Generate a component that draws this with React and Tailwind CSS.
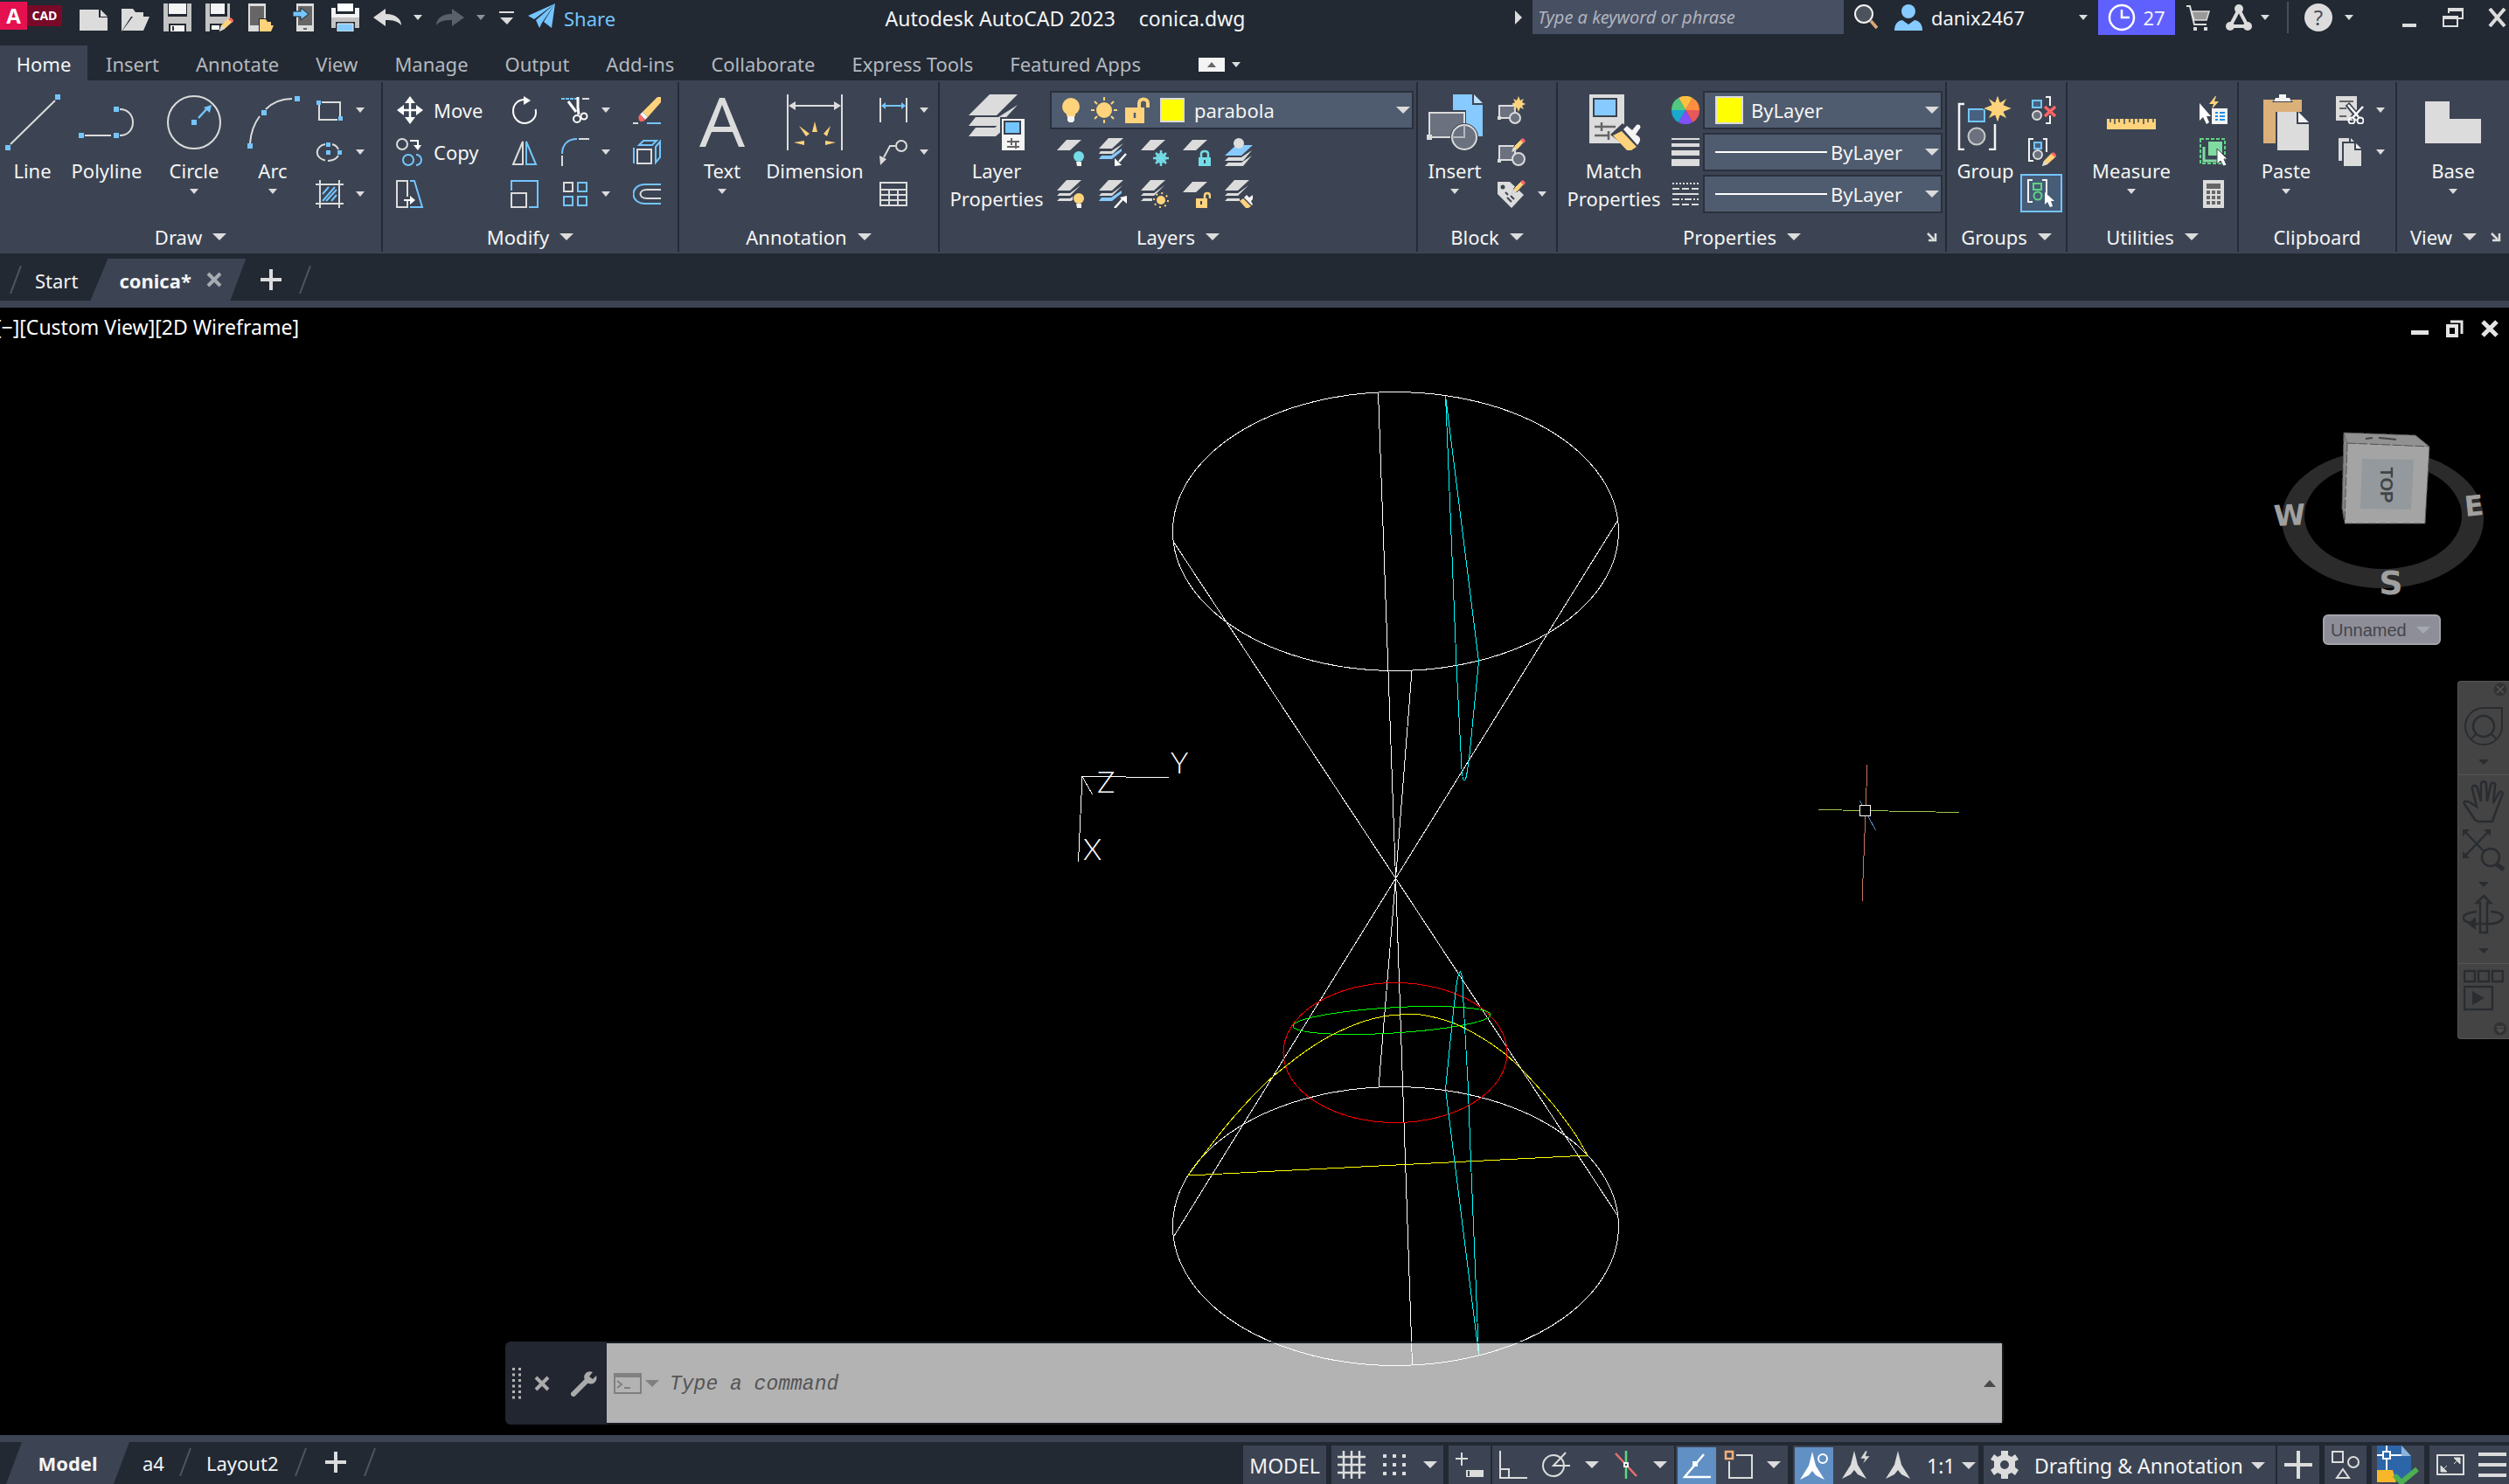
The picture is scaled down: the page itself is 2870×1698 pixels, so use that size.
import React from "react";

/* ---------- shared primitives ---------- */

const W = "#dcdcdc";
const L = "#74c5ff";
const Y = "#ffd37b";
const BG = "#3c4453";

function Svg({ w = 32, h = 32, className = "", children }) {
  return (
    <svg width={w} height={h} viewBox={`0 0 ${w} ${h}`} fill="none" className={`shrink-0 ${className}`} aria-hidden="true">
      {children}
    </svg>
  );
}

function Caret({ big = false, className = "" }) {
  return big ? (
    <Svg w={16} h={8} className={className}><path d="M0 0h16l-8 8z" fill={W} /></Svg>
  ) : (
    <Svg w={10} h={6} className={className}><path d="M0 0h10l-5 6z" fill={W} /></Svg>
  );
}

function Sq({ x, y, s = 5 }) {
  return <rect x={x} y={y} width={s} height={s} fill={L} />;
}

function IconButton({ label, className = "", children }) {
  return (
    <button type="button" aria-label={label} title={label} className={`flex shrink-0 items-center justify-center ${className}`}>
      {children}
    </button>
  );
}

function Sheet({ x = 0, y = 0, fill = W }) {
  return <path transform={`translate(${x} ${y})`} d="M11 0h17L15 12H0z" fill={fill} />;
}

const PENCIL = (
  <g>
    <path d="M17 15l2-6 9-9 4 3-9 10z" fill={Y} stroke={BG} strokeWidth="1" />
    <path d="M16 16l2-6 4 4z" fill={W} />
    <path d="M26 2l3-2 3 3-2 3z" fill="#ff6464" />
  </g>
);

/* ---------- large ribbon icons (64px) ---------- */

const big = {
  line: (
    <Svg w={64} h={64}><path d="M7 57L58 7" stroke={W} strokeWidth="2" /><Sq x={1} y={58} s={6} /><Sq x={58} y={0} s={6} /></Svg>
  ),
  polyline: (
    <Svg w={64} h={64}><path d="M7 47h30M47 17c20 0 20 30 0 30" stroke={W} strokeWidth="2" /><Sq x={0} y={44} s={6} /><Sq x={40} y={44} s={6} /><Sq x={40} y={14} s={6} /></Svg>
  ),
  circle: (
    <Svg w={64} h={64}><circle cx="32" cy="32" r="30" stroke={W} strokeWidth="2" /><path d="M37 27l11-12" stroke={L} strokeWidth="2.5" /><path d="M52 12l-2 9-7-6z" fill={L} /><Sq x={29} y={29} s={6} /></Svg>
  ),
  arc: (
    <Svg w={64} h={64}><path d="M6 56C7 42 11 33 17 25M24 17C32 9 42 5 54 5" stroke={W} strokeWidth="2" /><Sq x={3} y={56} s={6} /><Sq x={19} y={18} s={6} /><Sq x={57} y={2} s={6} /></Svg>
  ),
  text: (
    <Svg w={64} h={64}><path d="M29 4h6l23 56h-7l-7-17H20l-7 17H6zM32 12L22.500 37h19z" fill={W} fillRule="evenodd" /></Svg>
  ),
  dimension: (
    <Svg w={64} h={64}>
      <path d="M1 0v64M63 0v64M6 13h52" stroke={W} strokeWidth="2" />
      <path d="M2 13l8-5v10zM62 13l-8-5v10z" fill={W} />
      <g fill={Y}><path d="M32 31l3 12h-6zM14 36l12 9-4 3zM50 36l-4 12-4-3zM8 55l12-2v5zM56 55l-12-2v5z" /></g>
    </Svg>
  ),
  layer: (
    <Svg w={64} h={64}>
      <path d="M24 0h32L32 24H0z" fill={W} />
      <path d="M8 26h26L56 12 34 36H0z" fill={W} />
      <path d="M8 38h22l10-8v10l-9 8H0z" fill={W} />
      <path d="M36 26h28v38H36z" fill={BG} />
      <path d="M38 28h26v36H38z" fill="#f4f4f4" />
      <path d="M41 31h18v14H41z" fill={L} stroke="#3a4250" strokeWidth="2" />
      <path d="M44 54h14M44 60h14M49 50v8M54 54v8" stroke="#666" strokeWidth="2" />
    </Svg>
  ),
  insert: (
    <Svg w={64} h={64}>
      <path d="M30 0h22v12h12v36H30z" fill="#86caff" /><path d="M54 0l10 10H54z" fill="#bfe2ff" />
      <rect x="1" y="18" width="44" height="32" fill={BG} /><rect x="3" y="21" width="40" height="28" fill="#6b717f" stroke={W} strokeWidth="2" />
      <circle cx="43" cy="49" r="16" fill={BG} /><path d="M30 40v9h13V36" fill="#6b717f" />
      <circle cx="43" cy="49" r="14" fill="#6b717f" stroke={W} strokeWidth="2" />
      <path d="M43 35v14H29" stroke="#b5b8bf" strokeWidth="2" /><rect x="0" y="46" width="6" height="6" fill={W} />
    </Svg>
  ),
  match: (
    <Svg w={64} h={64}>
      <path d="M4 0h40v56H4z" fill={W} /><rect x="9" y="5" width="26" height="20" fill="#86caff" stroke="#3a4250" strokeWidth="2" />
      <path d="M10 37h24M10 47h16M18 32v10M26 42v10" stroke="#666" strokeWidth="2.500" />
      <path d="M28 46l14-13 21 18-12 13z" fill={BG} />
      <path d="M31 47l10-5 17 18-6 4h-5z" fill={Y} />
      <path d="M43 40l4-4 6 5 5-6c4-2 6 3 3 5l-4 6c7 3 6 7 2 12z" fill="#f4f4f4" />
    </Svg>
  ),
  group: (
    <Svg w={64} h={64}>
      <path d="M8 11H2v52h6M36 63h7V34" stroke="#f4f4f4" strokeWidth="2.500" />
      <rect x="13" y="17" width="18" height="14" fill="#466280" stroke={L} strokeWidth="2" />
      <circle cx="22" cy="48" r="9.500" fill="#6b717f" stroke="#c8c8c8" strokeWidth="2" />
      <path d="M46 0l3 9 8-5-4 8 10 4-10 4 4 8-8-4-3 9-3-9-8 4 4-8-10-4 10-4-4-8 8 5z" fill={Y} stroke={BG} strokeWidth="1" />
    </Svg>
  ),
  measure: (
    <Svg w={64} h={64}><path d="M4 28h56v12H4z" fill={Y} /><path d="M8 28v4M13 28v6M18 28v4M24 28v6M30 28v4M35 28v6M40 28v4M46 28v6M51 28v4M57 28v4" stroke={BG} strokeWidth="1.500" /></Svg>
  ),
  paste: (
    <Svg w={64} h={64}>
      <path d="M6 6h44v14H20v36H6z" fill="#dbb079" /><path d="M16 9h24l-4-5h-4V0h-8v4h-4z" fill={BG} /><path d="M18 8h20l-2-4h-4V0h-8v4h-4z" fill="#f4f4f4" />
      <path d="M22 20h22v14h14v30H22z" fill={W} /><path d="M46 20l12 12H46z" fill="#f4f4f4" />
    </Svg>
  ),
  base: (
    <Svg w={64} h={64}><path d="M0 8h28v20h36v28H0z" fill={W} /></Svg>
  ),
};

/* ---------- small ribbon icons (32px) ---------- */

const small = {
  rectangle: <Svg><path d="M7 7h21v18M4 10v17h21" stroke={W} strokeWidth="2" /><Sq x={1} y={5} /><Sq x={26} y={23} /></Svg>,
  ellipse: <Svg><path d="M11 7a12 9.500 0 0 0 0 18.500M14 26a13 9.500 0 0 0 12-6M26 13a12 9 0 0 0-7-6" stroke={W} strokeWidth="2" /><Sq x={12} y={5} /><Sq x={12} y={14} /><Sq x={25} y={14} /></Svg>,
  hatch: <Svg><path d="M0 5h32M0 27h32M5 0v32M27 0v32" stroke={W} strokeWidth="2" /><path d="M8 16l7-8M8 24l14-16M12 24l12-13M18 24l6-7" stroke={L} strokeWidth="2" /></Svg>,
  move: <Svg><path d="M16 3v26M3 16h26" stroke="#fff" strokeWidth="2.500" /><path d="M16 0l6 8H10zM16 32l6-8H10zM1 16l8-6v12zM31 16l-8-6v12z" fill="#fff" /></Svg>,
  copy: <Svg><circle cx="7" cy="7" r="6" stroke={W} strokeWidth="2" /><path d="M16 3h9v8" stroke="#fff" strokeWidth="2" /><path d="M20 8h9l-4 6z" fill="#fff" /><circle cx="14" cy="25" r="6" stroke={L} strokeWidth="2" /><path d="M23 19a6 6 0 1 1 0 12" stroke={L} strokeWidth="2" /></Svg>,
  stretch: <Svg><path d="M13 22v9H1V1h12v18" stroke={W} strokeWidth="2" /><path d="M16 1h5l9 30H16" stroke={L} strokeWidth="2" /><path d="M9 23h8" stroke="#fff" strokeWidth="2" /><path d="M16 18l6 5-6 5z" fill="#fff" /></Svg>,
  rotate: <Svg><path d="M16 4C8 4 3 10 3 17c0 8 6 14 13 14s13-6 13-12c0-2 0-3-.5-4" stroke="#fff" strokeWidth="2" /><path d="M15 0l8 5-8 5z" fill="#fff" /></Svg>,
  mirror: <Svg><path d="M14 4v26H3z" stroke={W} strokeWidth="2" /><path d="M18 4v26h11z" stroke={L} strokeWidth="2" /></Svg>,
  scale: <Svg><path d="M1 12V1h30v30H21" stroke={L} strokeWidth="2" /><path d="M1 15h17v16H1z" stroke={W} strokeWidth="2" /></Svg>,
  trim: <Svg><path d="M0 3h18" stroke={L} strokeWidth="2" strokeDasharray="4 1" /><path d="M24 3h8" stroke={W} strokeWidth="2" /><path d="M19 1v12l1 8M8 6l9 12" stroke="#fff" strokeWidth="3" /><circle cx="18" cy="26" r="4" stroke="#fff" strokeWidth="2" /><circle cx="26" cy="23" r="3.500" stroke="#fff" strokeWidth="2" /></Svg>,
  fillet: <Svg><path d="M1 18C1 7 8 1 18 1" stroke={L} strokeWidth="2" /><path d="M20 1h12M1 20v12" stroke={W} strokeWidth="2" /></Svg>,
  array: <Svg><path d="M3 3h10v10H3z" stroke={W} strokeWidth="2" /><path d="M19 3h10v10H19zM3 19h10v10H3zM19 19h10v10H19z" stroke={L} strokeWidth="2" /></Svg>,
  erase: <Svg><path d="M11 18L28 1l4 0v6L17 24z" fill={Y} /><path d="M11 18l6 6-3 3-6-6z" fill="#f4f4f4" /><path d="M8 21l6 6c-6 6-10-2-6-6z" fill="#ff6464" /><path d="M0 31h6" stroke={W} strokeWidth="2" /><path d="M16 31h16" stroke={L} strokeWidth="2" /></Svg>,
  explode: <Svg><path d="M1 11v18M12 3h15l-5 5H7zM26 10l5-6v18l-5 6z" stroke={L} strokeWidth="2" /><path d="M5 13h16v16H5z" stroke={W} strokeWidth="2" /></Svg>,
  offset: <Svg><path d="M32 5H14C-4 5-4 27 14 27h18" stroke={L} strokeWidth="2" /><path d="M32 11H16c-10 0-10 10 0 10h16" stroke={W} strokeWidth="2" /></Svg>,
  linear: <Svg><path d="M1 2v28M31 2v28" stroke={W} strokeWidth="2" /><path d="M6 11h20" stroke={L} strokeWidth="2" /><path d="M2 11l5-4v8zM30 11l-5-4v8z" fill={L} /></Svg>,
  leader: <Svg><path d="M5 22l7-13h6" stroke={W} strokeWidth="2" /><circle cx="25" cy="9" r="6" stroke={W} strokeWidth="2" /><path d="M0 20l8 4-7 7z" fill={W} /></Svg>,
  table: <Svg><path d="M1 3h30v26H1zM1 11h30M1 17h30M1 23h30M11 11v18M21 11v18" stroke={W} strokeWidth="2" /></Svg>,
  layOff: <Svg><Sheet y={2} /><circle cx="25" cy="21" r="6" fill="#74dce6" /><path d="M22 27h6v5h-5z" fill="#f4f4f4" /></Svg>,
  layIso: <Svg><Sheet y={0} /><path d="M2 15h12l14-9-12 12H0zM2 21h12" fill={W} /><path d="M3 20h11l12-8v3L15 24H0z" fill="#86caff" /><path d="M31 18l-8 9" stroke="#fff" strokeWidth="2.500" /><path d="M18 32v-9l8 8z" fill="#fff" /></Svg>,
  layFrz: <Svg><Sheet y={2} /><g stroke="#74dce6" strokeWidth="2.500"><path d="M23 14v18M14 23h18M17 17l12 12M29 17L17 29" /></g><circle cx="23" cy="23" r="5" stroke="#74dce6" strokeWidth="2" /></Svg>,
  layLck: <Svg><Sheet y={2} /><path d="M21 22v-4c0-4 8-4 8 0v4" stroke="#74dce6" strokeWidth="2.500" /><path d="M18 22h14v10H18z" fill="#74dce6" /><path d="M25 25v4" stroke={BG} strokeWidth="2" /></Svg>,
  layCur: <Svg><path d="M13 8h19L19 20H0z" fill="#86caff" /><circle cx="16" cy="6" r="6" fill={W} /><path d="M4 22h15l12-8-10 12H0zM4 28h15l12-8-10 12H0z" fill={W} /></Svg>,
  layOn: <Svg><Sheet /><path d="M3 15h12l12-9-12 12H0zM3 21h12l6-4v4l-5 3H0z" fill={W} /><circle cx="25" cy="21" r="7" fill={BG} /><circle cx="25" cy="21" r="6" fill={Y} /><path d="M22 27h6v5h-5z" fill="#f4f4f4" /></Svg>,
  layUniso: <Svg><Sheet /><path d="M3 15h12l12-9-12 12H0z" fill={W} /><path d="M3 20h11l12-8v3L15 24H0z" fill="#86caff" /><path d="M18 32l9-10" stroke="#fff" strokeWidth="2.500" /><path d="M32 18v9l-8-7z" fill="#fff" /></Svg>,
  layThaw: <Svg><Sheet /><path d="M3 15h12l12-9-12 12H0zM3 21h10v3H0z" fill={W} /><circle cx="23" cy="23" r="9" fill={BG} /><circle cx="23" cy="23" r="5" fill={Y} /><circle cx="23" cy="23" r="8" stroke={Y} strokeWidth="2" strokeDasharray="2 4.280" /></Svg>,
  layUlk: <Svg><Sheet y={2} /><path d="M25 22v-4c0-4 6-4 6 0v3" stroke={Y} strokeWidth="2.500" /><path d="M15 21h13v11H15z" fill={Y} /><path d="M21 24v4" stroke={BG} strokeWidth="2" /></Svg>,
  layMatch: <Svg><Sheet /><path d="M3 15h12l12-9-12 12H0zM3 21h14v3H0z" fill={W} /><path d="M17 24l4-3 9 9-3 2h-3z" fill={Y} /><path d="M22 20l3-3 3 3 4-3v5l-2 2 2 4-1 1z" fill="#f4f4f4" /></Svg>,
  blkNew: <Svg><path d="M2 11h18v14H2z" fill="#6b717f" stroke={W} strokeWidth="2" /><circle cx="20" cy="25" r="6" fill="#6b717f" stroke={W} strokeWidth="2" /><path d="M0 23h4v4H0z" fill={W} /><path d="M24 0l2 5 4-2-2 4 4 2-4 2 2 4-4-2-2 5-2-5-4 2 2-4-4-2 4-2-2-4 4 2z" fill={Y} /></Svg>,
  blkEdit: <Svg><path d="M2 9h18v16H2z" fill="#6b717f" stroke={W} strokeWidth="2" /><circle cx="24" cy="24" r="7" fill="#6b717f" stroke={W} strokeWidth="2" /><path d="M0 24h4v4H0z" fill={W} />{PENCIL}</Svg>,
  blkAttr: <Svg><path d="M0 2h14l16 15-14 15L0 16z" fill={W} /><circle cx="6" cy="8" r="2.500" fill={BG} /><path d="M9 14l3 3M11 20l5 5M15 18l4 4" stroke={BG} strokeWidth="2" />{PENCIL}</Svg>,
  wheel: (
    <Svg>
      <g transform="translate(16 16)">
        <path d="M0 0L-8-14A16 16 0 0 1 8-14z" fill="#fec041" /><path d="M0 0L8-14A16 16 0 0 1 16 0z" fill="#ff8f3f" /><path d="M0 0H16A16 16 0 0 1 8 14z" fill="#e85858" />
        <path d="M0 0L8 14A16 16 0 0 1-8 14z" fill="#8050f8" /><path d="M0 0L-8 14A16 16 0 0 1-16 0z" fill="#18a8d0" /><path d="M0 0H-16A16 16 0 0 1-8-14z" fill="#50c880" />
      </g>
    </Svg>
  ),
  lineweight: <Svg><path d="M0 0h32v2H0zM0 6h32v4H0zM0 14h32v6H0zM0 24h32v8H0z" fill={W} /></Svg>,
  linetype: <Svg><g stroke={W} strokeWidth="2"><path d="M1 4h30" strokeDasharray="2 2" /><path d="M1 10h30" strokeDasharray="8 3" /><path d="M1 16h30" /><path d="M1 22h30" strokeDasharray="8 2 2 2" /><path d="M1 28h30" strokeDasharray="8 3" /></g></Svg>,
  ungroup: <Svg><path d="M20 1h5v10M25 22v9h-5" stroke="#f4f4f4" strokeWidth="2" /><rect x="5" y="5" width="10" height="8" fill="#466280" stroke={L} strokeWidth="2" /><circle cx="10" cy="22" r="5" fill="#6b717f" stroke={W} strokeWidth="2" /><path d="M19 12l12 11M31 12L19 23" stroke="#ff6464" strokeWidth="3.500" /></Svg>,
  groupEdit: <Svg><path d="M6 1H1v25h5M17 1h4v15" stroke="#f4f4f4" strokeWidth="2" /><rect x="7" y="5" width="8" height="7" fill="#466280" stroke={L} strokeWidth="2" /><circle cx="11" cy="19" r="5" fill="#6b717f" stroke={W} strokeWidth="2" /><path d="M16 32l2-6 9-9 5 4-10 9z" fill={Y} /><path d="M16 32l2-6 4 4z" fill={W} /><path d="M26 18l3-2 3 3-1 3z" fill="#ff6464" /></Svg>,
  groupSel: <Svg><path d="M6 1H1v25h5M17 1h5v16" stroke="#f4f4f4" strokeWidth="2" /><rect x="7" y="5" width="9" height="7" stroke="#5fd583" strokeWidth="2" /><circle cx="12" cy="19" r="4.500" stroke="#5fd583" strokeWidth="2" /><path d="M20 15v14l3-3 3 6 3-1-2-6h4z" fill="#fff" /></Svg>,
  quickSel: <Svg><path d="M18 0l-7 9h5l-2 6 8-9h-5l2-6z" fill={Y} /><path d="M0 8v20l4-4 4 8 3-2-3-7h5z" fill="#fff" /><path d="M14 14h18v18H14z" fill="#f4f4f4" /><path d="M18 19h3M18 23h3M18 27h3M23 19h6M23 23h6M23 27h6" stroke="#1f8fe8" strokeWidth="2" /></Svg>,
  selAll: <Svg><rect x="1" y="1" width="28" height="28" stroke="#5fd583" strokeWidth="2" strokeDasharray="4 2" /><path d="M10 4h16v16H10z" fill="#7fdb9f" /><path d="M5 10v16h15" stroke="#7fdb9f" strokeWidth="3" /><path d="M20 12v18l4-4 3 6 4-1-3-7h4z" fill="#fff" stroke={BG} strokeWidth="1" /></Svg>,
  calc: <Svg><path d="M4 0h24v32H4z" fill={W} /><path d="M8 4h16v6H8z" fill="#666" /><path d="M8 14h16M8 20h16M8 26h16" stroke="#666" strokeWidth="4" strokeDasharray="4 2" /></Svg>,
  cut: <Svg><path d="M0 0h24v28H0z" fill={W} /><path d="M4 6h16M4 14h8M4 23h8" stroke="#666" strokeWidth="2" /><path d="M13 9l14 17M32 11L18 26" stroke={BG} strokeWidth="6" /><path d="M14 10l12 14M31 12L19 25" stroke="#fff" strokeWidth="2.500" /><circle cx="18" cy="28" r="3.500" stroke="#fff" strokeWidth="2" /><circle cx="28" cy="28" r="3.500" stroke="#fff" strokeWidth="2" /></Svg>,
  copyClip: <Svg><path d="M3 0h12v4h-8v22H3z" fill={W} /><path d="M17 0l4 4h-4z" fill={W} /><path d="M9 6h12v8h8v18H9z" fill={W} /><path d="M23 6l6 6h-6z" fill="#f4f4f4" /></Svg>,
};

/* ---------- ribbon ---------- */

function BigButton({ icon, lines, caret, className = "" }) {
  return (
    <button type="button" className={`flex shrink-0 flex-col items-center pt-[6px] ${className}`}>
      {big[icon]}
      <span className="mt-[7px] block whitespace-nowrap text-center leading-[32px]">
        {lines.map((t) => <span key={t} className="block">{t}</span>)}
      </span>
      {caret && <Caret className="mt-[5px]" />}
    </button>
  );
}

function Tool({ icon, label, caret, text }) {
  return (
    <div className="flex h-[48px] items-center">
      <IconButton label={label}>{small[icon]}{text && <span className="ml-[11px] leading-[32px]">{text}</span>}</IconButton>
      {caret && <IconButton label={`${label} options`} className="ml-[14px]"><Caret /></IconButton>}
    </div>
  );
}

function Column({ items, className = "" }) {
  return <div className={`shrink-0 ${className}`}>{items.map((it) => <Tool key={it.label} {...it} />)}</div>;
}

function Panel({ title, caret = true, launcher, last, children }) {
  return (
    <section className={`my-[2px] flex min-w-0 flex-col pt-[8px] ${last ? "" : "border-r-2 border-[#252b35]"}`} aria-label={title}>
      <div className="flex h-[144px]">{children}</div>
      <div className="flex h-[42px] items-center pt-[8px]">
        <button type="button" className="flex flex-1 items-center justify-center whitespace-nowrap">
          {title}
          {caret && <Caret big className="ml-[12px]" />}
        </button>
        {launcher && (
          <IconButton label={`${title} settings`} className="mr-[8px] w-[14px]">
            <Svg w={12} h={12}><path d="M1 2l7 7" stroke={W} strokeWidth="2.500" /><path d="M10 2v8H2" stroke={W} strokeWidth="2.500" /></Svg>
          </IconButton>
        )}
      </div>
    </section>
  );
}

function Combo({ label, value, width, children }) {
  return (
    <label className={`flex h-[44px] items-center border-2 border-[#2a303c] bg-[#4f5b6e] ${width}`}>
      {children}
      <select aria-label={label} defaultValue={value} className="min-w-0 flex-1 appearance-none bg-transparent outline-none">
        <option>{value}</option>
      </select>
      <Caret big className="mr-[2px]" />
    </label>
  );
}

function Ribbon() {
  return (
    <div className="grid grid-cols-[438fr_339fr_298fr_547fr_160fr_445fr_138fr_196fr_181fr_128fr] bg-[#3c4453] text-[22px] text-[#f4f4f4]">
      <Panel title="Draw">
        <BigButton icon="line" lines={["Line"]} className="w-[74px]" />
        <BigButton icon="polyline" lines={["Polyline"]} className="w-[96px]" />
        <BigButton icon="circle" lines={["Circle"]} caret className="w-[104px]" />
        <BigButton icon="arc" lines={["Arc"]} caret className="w-[76px]" />
        <Column className="ml-[11px]" items={[
          { icon: "rectangle", label: "Rectangle", caret: true },
          { icon: "ellipse", label: "Ellipse", caret: true },
          { icon: "hatch", label: "Hatch", caret: true },
        ]} />
      </Panel>
      <Panel title="Modify">
        <div className="grid grid-cols-[131px_58px_82px_32px] pl-[15px]">
          <Column items={[
            { icon: "move", label: "Move", text: "Move" },
            { icon: "copy", label: "Copy", text: "Copy" },
            { icon: "stretch", label: "Stretch" },
          ]} />
          <Column items={[{ icon: "rotate", label: "Rotate" }, { icon: "mirror", label: "Mirror" }, { icon: "scale", label: "Scale" }]} />
          <Column items={[
            { icon: "trim", label: "Trim", caret: true },
            { icon: "fillet", label: "Fillet", caret: true },
            { icon: "array", label: "Array", caret: true },
          ]} />
          <Column items={[{ icon: "erase", label: "Erase" }, { icon: "explode", label: "Explode" }, { icon: "offset", label: "Offset" }]} />
        </div>
      </Panel>
      <Panel title="Annotation">
        <BigButton icon="text" lines={["Text"]} caret className="w-[98px]" />
        <BigButton icon="dimension" lines={["Dimension"]} className="w-[114px]" />
        <Column className="ml-[17px]" items={[
          { icon: "linear", label: "Linear", caret: true },
          { icon: "leader", label: "Leader", caret: true },
          { icon: "table", label: "Table" },
        ]} />
      </Panel>
      <Panel title="Layers">
        <BigButton icon="layer" lines={["Layer", "Properties"]} className="w-[126px] pl-[4px]" />
        <div className="pt-[2px]">
          <Combo label="Layer" value="parabola" width="w-[416px]">
            <Svg w={20} h={28} className="ml-[12px]"><circle cx="10" cy="10" r="10" fill={Y} /><path d="M5 16h10v5H5z" fill={Y} /><path d="M6 21h8v5l-2 2H8l-2-2z" fill="#f4f4f4" /></Svg>
            <Svg w={32} h={32} className="ml-[12px]"><circle cx="16" cy="16" r="9" fill={Y} /><path d="M16 1v4M16 27v4M1 16h4M27 16h4M5 6l3 3M24 23l3 3M5 26l3-3M24 9l3-3" stroke={Y} strokeWidth="2" /></Svg>
            <Svg w={28} h={30} className="ml-[8px]"><path d="M16 12V7c0-6 10-6 10 0v5" stroke={Y} strokeWidth="4" /><path d="M0 12h22v18H0z" fill={Y} /><path d="M11 18v6" stroke="#4f5b6e" strokeWidth="2.500" /></Svg>
            <span className="ml-[12px] mr-[11px] h-[28px] w-[28px] border-2 border-[#dcdcdc] bg-[#ffff00]" />
          </Combo>
          <div className="grid grid-cols-[repeat(5,48px)] pl-[8px] pt-[2px]">
            {[
              ["layOff", "Off"], ["layIso", "Isolate"], ["layFrz", "Freeze"], ["layLck", "Lock"], ["layCur", "Make Current"],
              ["layOn", "Turn All Layers On"], ["layUniso", "Unisolate"], ["layThaw", "Thaw All Layers"], ["layUlk", "Unlock"], ["layMatch", "Match Layer"],
            ].map(([icon, label]) => <Tool key={icon} icon={icon} label={label} />)}
          </div>
        </div>
      </Panel>
      <Panel title="Block">
        <BigButton icon="insert" lines={["Insert"]} caret className="w-[84px]" />
        <Column className="ml-[7px]" items={[
          { icon: "blkNew", label: "Create Block" },
          { icon: "blkEdit", label: "Block Editor" },
          { icon: "blkAttr", label: "Edit Attributes", caret: true },
        ]} />
      </Panel>
      <Panel title="Properties" launcher>
        <BigButton icon="match" lines={["Match", "Properties"]} className="w-[126px] pl-[2px]" />
        <Column className="ml-[4px]" items={[
          { icon: "wheel", label: "Object Color" },
          { icon: "lineweight", label: "Lineweight" },
          { icon: "linetype", label: "Linetype" },
        ]} />
        <div className="ml-[4px] flex flex-col gap-[4px] pt-[2px]">
          <Combo label="Color" value="ByLayer" width="w-[274px]">
            <span className="ml-[12px] mr-[9px] h-[32px] w-[32px] border-2 border-[#dcdcdc] bg-[#ffff00]" />
          </Combo>
          <Combo label="Lineweight" value="ByLayer" width="w-[274px]"><span className="ml-[12px] mr-[4px] h-[2px] w-[128px] bg-white" /></Combo>
          <Combo label="Linetype" value="ByLayer" width="w-[274px]"><span className="ml-[12px] mr-[4px] h-[2px] w-[128px] bg-white" /></Combo>
        </div>
      </Panel>
      <Panel title="Groups">
        <BigButton icon="group" lines={["Group"]} className="ml-[4px] w-[80px]" />
        <div>
          <div className="ml-[9px]"><Tool icon="ungroup" label="Ungroup" /><Tool icon="groupEdit" label="Group Edit" /></div>
          <button type="button" aria-label="Group Selection On/Off" aria-pressed="true" className="mt-[1px] flex h-[44px] w-[48px] items-center justify-center border-2 border-[#74c5ff] bg-[#475c76]">{small.groupSel}</button>
        </div>
      </Panel>
      <Panel title="Utilities">
        <BigButton icon="measure" lines={["Measure"]} caret className="ml-[16px] w-[114px]" />
        <Column className="ml-[21px]" items={[
          { icon: "quickSel", label: "Quick Select" },
          { icon: "selAll", label: "Select All" },
          { icon: "calc", label: "Quick Calculator" },
        ]} />
      </Panel>
      <Panel title="Clipboard" caret={false}>
        <BigButton icon="paste" lines={["Paste"]} caret className="ml-[18px] w-[72px]" />
        <Column className="ml-[21px]" items={[
          { icon: "cut", label: "Cut", caret: true },
          { icon: "copyClip", label: "Copy Clip", caret: true },
        ]} />
      </Panel>
      <Panel title="View" launcher last>
        <BigButton icon="base" lines={["Base"]} caret className="ml-[32px] w-[64px]" />
      </Panel>
    </div>
  );
}

/* ---------- title bar ---------- */

function TitleBar() {
  const quick = [
    ["New", <Svg><path d="M0 7h22v9h10v15H0z" fill={W} /><path d="M24 7l8 8h-8z" fill={W} /></Svg>],
    ["Open", <Svg><path d="M0 32V6h13l3 4h9v5H11z" fill={W} /><path d="M13 15h19l-7 16H1z" fill={W} /></Svg>],
    ["Save", <Svg><path d="M0 0h5v15h22V0h5v32h-6v-9H6v9H0z" fill="#c4c4c4" /><path d="M6 0h20v12H6z" fill="#f4f4f4" /><path d="M8 25h16v7H8z" fill="#f4f4f4" /><path d="M11 26v5" stroke="#333" strokeWidth="2" /></Svg>],
    ["Save As", <Svg><path d="M0 0h5v15h20V0h3v18l-8 5H5v9H0z" fill="#c4c4c4" /><path d="M6 0h16v12H6z" fill="#f4f4f4" /><path d="M7 25h9v5H7z" fill="#f4f4f4" /><path d="M16 32l2-7 9-9 5 4-10 9z" fill={Y} /><path d="M16 32l2-7 4 4z" fill={W} /><path d="M26 18l3-2 3 3-1 3z" fill="#ff6464" /></Svg>],
    ["Open from Web & Mobile", <Svg><path d="M1 0h20v17h-8v15H1z" fill={W} /><path d="M3 3h16v14h-6v8H3z" fill="#666" /><path d="M14 32V18h7l2 3h4v4h3l-3 7z" fill={Y} /></Svg>],
    ["Save to Web & Mobile", <Svg><path d="M8 0h20v32H8z" fill={W} /><path d="M10 3h16v22H10z" fill="#666" /><path d="M16 29h4" stroke="#666" strokeWidth="2" /><path d="M4 9h9V5l9 7-9 7v-4H4z" fill={L} stroke="#222933" strokeWidth="1" /></Svg>],
    ["Plot", <Svg><path d="M7 0h18v9H7z" fill="#fff" /><path d="M0 5h5v7h22V5h5v12H0z" fill="#f4f4f4" /><path d="M0 16h32v12h-5v-7H5v7H0z" fill="#c4c4c4" /><path d="M7 23h18v9H7z" fill="#86caff" stroke="#f4f4f4" /></Svg>],
    ["Undo", <Svg><path d="M0 16L14 6v6c12 0 18 6 18 13-4-5-9-6-18-6v7z" fill={W} /></Svg>],
  ];
  return (
    <header className="flex h-[52px] items-center bg-[#222933] pb-[13px] text-[22px] text-[#f4f4f4]">
      <button type="button" aria-label="AutoCAD menu" className="flex items-center self-start pt-[2px] font-['Open_Sans',sans-serif] font-bold">
        <span className="flex h-[32px] w-[31px] items-center justify-center bg-[#e51050] text-[24px] leading-[32px] text-white">A</span>
        <span className="flex h-[24px] w-[40px] items-center justify-center bg-[#780a28] text-[14px] leading-[24px] text-white">CAD</span>
      </button>
      <nav aria-label="Quick access" className="ml-[20px] flex items-center gap-[16px]">
        {quick.map(([label, icon]) => <IconButton key={label} label={label}>{icon}</IconButton>)}
      </nav>
      <IconButton label="Undo list" className="ml-[14px]"><Caret /></IconButton>
      <IconButton label="Redo" className="ml-[16px]"><Svg><path d="M32 16L18 6v6C6 12 0 18 0 25c4-5 9-6 18-6v7z" fill="#5a6069" /></Svg></IconButton>
      <IconButton label="Redo list" className="ml-[14px]"><Svg w={10} h={6}><path d="M0 0h10l-5 6z" fill="#8d9197" /></Svg></IconButton>
      <IconButton label="Customize quick access" className="ml-[16px]"><Svg w={17} h={16}><path d="M0 1h17v2H0zM1 8h15l-7 8z" fill={W} /></Svg></IconButton>
      <button type="button" className="ml-[16px] flex items-center gap-[9px] pt-[2px] leading-[30px] text-[#74c5ff]">
        <Svg className="mb-[4px]"><path d="M31 1L0 15l7 4zM31 1L9 20l4 9 3-6zM31 1L18 22l9 7z" fill={L} /></Svg>Share
      </button>
      <h1 className="flex-1 whitespace-pre pt-[3px] text-center text-[23px] leading-[30px]">
        <span>Autodesk AutoCAD 2023</span><span className="ml-[27px]">conica.dwg</span>
      </h1>
      <IconButton label="Collapse search" className="mr-[12px]"><Svg w={8} h={16}><path d="M0 0l8 8-8 8z" fill={W} /></Svg></IconButton>
      <input type="text" aria-label="Search" placeholder="Type a keyword or phrase" className="h-[39px] w-[356px] bg-[#474f63] px-[6px] text-[20px] italic text-[#b0b4bd] outline-none placeholder:text-[#b0b4bd]" />
      <IconButton label="Search" className="ml-[12px]"><Svg><circle cx="11" cy="12" r="10" fill="#4d535c" stroke="#f4f4f4" strokeWidth="2" /><path d="M19 20l7 8" stroke="#dba873" strokeWidth="3.500" /></Svg></IconButton>
      <button type="button" className="ml-[14px] flex items-center gap-[10px] leading-[30px]">
        <Svg><circle cx="16" cy="9" r="8" fill="#86caff" /><path d="M0 31c0-7 3-11 9-12l7 5 7-5c6 1 9 5 9 12z" fill="#86caff" /></Svg>danix2467
      </button>
      <IconButton label="Account menu" className="ml-[62px]"><Caret /></IconButton>
      <button type="button" className="ml-[12px] flex h-[41px] w-[88px] items-center justify-center gap-[8px] bg-[#6060ff] leading-[30px]">
        <Svg><circle cx="16" cy="16" r="14" stroke="#fff" strokeWidth="2.500" /><path d="M16 7v9h9" stroke="#fff" strokeWidth="2.500" /></Svg>27
      </button>
      <IconButton label="App store" className="ml-[13px]"><Svg w={28} h={30}><path d="M0 2h4l5 21h14" stroke={W} strokeWidth="2" /><path d="M6 8h20l-3 10H9z" fill="#999" stroke={W} strokeWidth="1.500" /><path d="M8 26h4v4H8zM20 26h4v4h-4z" fill={W} /></Svg></IconButton>
      <IconButton label="Autodesk services" className="ml-[17px]"><Svg w={30} h={30}><path d="M15 6L5 25h20z" stroke={W} strokeWidth="4" /><circle cx="15" cy="5" r="5" fill={W} /><circle cx="5" cy="25" r="5" fill={W} /><circle cx="25" cy="25" r="5" fill={W} /></Svg></IconButton>
      <IconButton label="Services menu" className="ml-[10px]"><Caret /></IconButton>
      <span className="ml-[20px] h-[36px] w-[2px] bg-[#474f5c]" />
      <IconButton label="Help" className="ml-[18px]"><span className="flex h-[32px] w-[32px] items-center justify-center rounded-full bg-[#dcdcdc] text-[24px] leading-[30px] text-[#4a5058]">?</span></IconButton>
      <IconButton label="Help menu" className="ml-[14px]"><Caret /></IconButton>
      <IconButton label="Minimize" className="ml-[56px]"><Svg w={16} h={24}><path d="M0 19h16v4H0z" fill={W} /></Svg></IconButton>
      <IconButton label="Restore" className="ml-[30px]"><Svg w={24} h={24}><path d="M7 7V3h16v10h-5" stroke={W} strokeWidth="2" /><path d="M6 1h18v4H6zM0 10h18v4H0z" fill={W} /><path d="M1 11h16v11H1z" stroke={W} strokeWidth="2" /></Svg></IconButton>
      <IconButton label="Close" className="ml-[28px] mr-[3px]"><Svg w={21} h={22}><path d="M2 1l17 20M19 1L2 21" stroke={W} strokeWidth="4" /></Svg></IconButton>
    </header>
  );
}

function RibbonTabs() {
  const tabs = ["Insert", "Annotate", "View", "Manage", "Output", "Add-ins", "Collaborate", "Express Tools", "Featured Apps"];
  return (
    <nav aria-label="Ribbon tabs" className="flex h-[40px] items-stretch bg-[#222933] text-[22px] text-[#b4b8be]">
      <button type="button" className="w-[100px] bg-[#3c4453] pt-[2px] text-[#f4f4f4]">Home</button>
      {tabs.map((t) => <button key={t} type="button" className="whitespace-nowrap px-[21px] pt-[2px]">{t}</button>)}
      <IconButton label="Minimize ribbon" className="ml-[45px] pt-[3px]"><Svg w={30} h={16}><path d="M0 0h30v16H0z" fill="#f4f4f4" /><path d="M10 11h10l-5-6z" fill="#666" /></Svg></IconButton>
      <IconButton label="Ribbon options" className="ml-[8px] pt-[3px]"><Caret /></IconButton>
    </nav>
  );
}

function Slash() {
  return <Svg w={14} h={32}><path d="M1 32L13 0" stroke="#4b5563" strokeWidth="2" /></Svg>;
}

function Plus() {
  return <Svg w={24} h={24}><path d="M12 0v24M0 12h24" stroke={W} strokeWidth="4" /></Svg>;
}

function FileTabs() {
  return (
    <nav aria-label="Drawings" className="flex h-[62px] items-end border-b-8 border-[#3c4453] bg-[#222933] pl-[11px] text-[22px] text-[#f4f4f4]">
      <div className="flex h-[48px] items-center"><Slash /></div>
      <button type="button" className="h-[48px] pl-[15px] pr-[14px] pt-[2px]">Start</button>
      <div className="flex h-[48px] w-[178px] items-center bg-[#3c4453] pl-[33px] [clip-path:polygon(20px_0,100%_0,calc(100%-18px)_100%,0_100%)]">
        <button type="button" className="pt-[2px] font-bold">conica*</button>
        <IconButton label="Close conica" className="ml-[17px]"><Svg w={18} h={18}><path d="M2 2l14 14M16 2L2 16" stroke="#a8abb2" strokeWidth="4" /></Svg></IconButton>
      </div>
      <IconButton label="New drawing" className="ml-[17px] h-[48px]"><Plus /></IconButton>
      <div className="ml-[20px] flex h-[48px] items-center"><Slash /></div>
    </nav>
  );
}

/* ---------- drawing canvas ---------- */

/* Smooth open curve through the given points. */
function curve(p) {
  let d = `M${p[0][0]} ${p[0][1]}`;
  for (let i = 0; i < p.length - 1; i++) {
    const a = p[i - 1] || p[i], b = p[i], c = p[i + 1], e = p[i + 2] || c;
    d += `C${b[0] + (c[0] - a[0]) / 6} ${b[1] + (c[1] - a[1]) / 6} ${c[0] - (e[0] - b[0]) / 6} ${c[1] - (e[1] - b[1]) / 6} ${c[0]} ${c[1]}`;
  }
  return d;
}

const PARABOLA = [
  [1359, 1345], [1377, 1321], [1407, 1283], [1445, 1242], [1472, 1219], [1499, 1199], [1526, 1183], [1556, 1170], [1582, 1163],
  [1602, 1161], [1625, 1161], [1661, 1170], [1691, 1185], [1718, 1203], [1739, 1222], [1763, 1248], [1784, 1273], [1802, 1298], [1816, 1322],
];

function Drawing() {
  return (
    <svg viewBox="0 352 2870 1290" preserveAspectRatio="xMidYMid slice" className="absolute inset-0 h-full w-full" fill="none" shapeRendering="crispEdges" role="img" aria-label="Double cone wireframe with conic sections">
      <g stroke="#fff">
        <ellipse cx="1596.500" cy="608" rx="255" ry="159.500" />
        <ellipse cx="1596.500" cy="1403" rx="255" ry="159.500" />
        <path d="M1343 621L1596.500 1005L1850.500 1391M1850.500 595.500L1596.500 1005L1342.500 1415M1576.500 449L1596.500 1005L1615.500 1562M1615 767.500L1596.500 1005L1577 1244" />
        <path d="M1233.500 986L1238 888.500L1337.500 889.500M1238 888.500L1249.500 909" />
      </g>
      <g fill="#fff" className="font-['Lato',sans-serif] font-light" fontSize="34">
        <text x="1339" y="885">Y</text>
        <text x="1239" y="984">X</text>
        <text x="1255" y="907">Z</text>
      </g>
      <ellipse cx="1596" cy="1204.500" rx="128" ry="80" stroke="#f00" />
      <ellipse cx="1592" cy="1167.500" rx="113" ry="14.600" transform="rotate(-3.350 1592 1167.500)" stroke="#0f0" />
      <path d={curve(PARABOLA) + "L1359 1345"} stroke="#ff0" />
      <g stroke="#0ff">
        <path d="M1653.500 453L1691.500 757L1680.500 868C1678 886 1677 893 1675 893S1672 886 1671.500 870L1666 761L1655.500 500z" />
        <path d="M1691.500 1550L1653.500 1246L1663 1152L1666.500 1123Q1669 1111 1670.500 1112T1673 1123L1674 1147L1679 1237L1682.500 1329z" />
      </g>
      <g>
        <path d="M2080 926.500L2241 929.500" stroke="#9cc84c" />
        <path d="M2136 875L2130 1032" stroke="#c87460" />
        <path d="M2127.500 916L2145.500 950" stroke="#5580c0" />
        <rect x="2127.500" y="921.500" width="12" height="12" fill="#000" stroke="#fff" />
      </g>
    </svg>
  );
}

function ViewCube() {
  return (
    <div className="flex w-[260px] flex-col items-center">
      <svg width="260" height="200" viewBox="2596 490 260 200" role="img" aria-label="View cube">
        <ellipse cx="2725.500" cy="594" rx="115.500" ry="79" fill="#2b2b2b" />
        <ellipse cx="2726" cy="590" rx="90" ry="61" fill="#000" />
        <path d="M2681 495l82 3 16 13-94-4z" fill="#919191" />
        <path d="M2681 495l4 12-2 92-4-17z" fill="#858585" />
        <path d="M2685 507l94 4-5 88h-92z" fill="#a4a4a4" />
        <path d="M2702 525l59 1-3 57-58-1z" fill="#93999c" />
        <path d="M2681 495l82 3 16 13-5 88h-92l-3-17zM2685 507l-3 92M2685 507l94 4" stroke="#555" strokeDasharray="10 3" fill="none" />
        <path d="M2706 502l8-1M2721 501l12 1 8 1" stroke="#444" strokeWidth="2" />
        <g className="font-['DejaVu_Sans',sans-serif] font-bold" fill="#a0a0a0" textAnchor="middle">
          <text x="2619" y="601" fontSize="33" transform="rotate(-3 2619 589)">W</text>
          <text x="2830" y="590" fontSize="32" transform="rotate(-6 2830 579)">E</text>
          <text x="2735" y="680" fontSize="38">S</text>
        </g>
        <text x="2730" y="562" fontSize="20" fill="#3f4447" textAnchor="middle" transform="rotate(90 2730 555)" className="font-['Liberation_Sans',sans-serif] font-bold">TOP</text>
      </svg>
      <button type="button" className="mr-[3px] mt-[13px] flex h-[35px] w-[135px] items-center justify-between rounded-[6px] border-2 border-[#a3a3ab] bg-[#8e8e98] pl-[7px] pr-[9px] font-['Liberation_Sans',sans-serif] text-[20px] leading-[28px] text-[#44454c]">
        Unnamed
        <Svg w={18} h={10}><path d="M1 1h16l-8 8z" fill="#a5a9b2" /></Svg>
      </button>
    </div>
  );
}

function NavBar() {
  const K = "#292c30";
  const tiny = <Svg w={12} h={6}><path d="M0 0h12L6 6z" fill={K} /></Svg>;
  return (
    <aside aria-label="Navigation bar" className="flex h-[410px] w-[59px] flex-col items-center rounded-l-[4px] border border-r-0 border-[#555] bg-[#444]">
      <IconButton label="Close navigation bar" className="mr-[2px] mt-[1px] self-end"><Svg w={16} h={16}><circle cx="8" cy="8" r="7.500" fill="#333" /><path d="M4 4l8 8M12 4l-8 8" stroke="#555" strokeWidth="1.500" /></Svg></IconButton>
      <IconButton label="Steering wheel" className="mt-[11px]"><Svg w={46} h={46}><path d="M23 2h21v21a21 21 0 1 1-21-21z" stroke={K} strokeWidth="2" /><circle cx="23" cy="23" r="12" stroke={K} strokeWidth="2.500" /><path d="M14 32l-5 5M32 32l5 5" stroke={K} strokeWidth="2" /></Svg></IconButton>
      <IconButton label="Wheel options" className="mt-[15px]">{tiny}</IconButton>
      <hr className="mt-[11px] w-full border-[#555]" />
      <IconButton label="Pan" className="mt-[5px]"><Svg w={48} h={50}><path d="M14 46L2 28c-2-4 3-4 6-2l8 5-5-20c-1-5 4-6 6-1l4 15V6c0-5 6-5 6 0l1 19 4-18c1-5 6-4 5 1l-2 19 6-11c2-4 6-2 4 2L36 42l-2 6H18z" stroke={K} strokeWidth="2.500" /></Svg></IconButton>
      <IconButton label="Zoom extents" className="mt-[6px]"><Svg w={50} h={50}><path d="M4 4l26 27M30 4L4 31" stroke={K} strokeWidth="2.500" /><path d="M1 1h8l-8 8zM33 1h-8l8 8zM1 34v-8l8 8z" fill={K} /><circle cx="33" cy="33" r="10" fill="#444" stroke={K} strokeWidth="2.500" /><path d="M40 41l8 6" stroke={K} strokeWidth="5" /></Svg></IconButton>
      <IconButton label="Zoom options" className="mt-[11px]">{tiny}</IconButton>
      <IconButton label="Orbit" className="mt-[8px]"><Svg w={48} h={48}><path d="M24 2l8 8h-4v34h-8V10h-4z" stroke={K} strokeWidth="2.500" /><path d="M16 20C-4 22-4 32 14 34h20c16-3 16-13-2-14" stroke={K} strokeWidth="2.500" /><path d="M6 34l9-8v15z" fill={K} /></Svg></IconButton>
      <IconButton label="Orbit options" className="mt-[14px]">{tiny}</IconButton>
      <hr className="mt-[11px] w-full border-[#555]" />
      <IconButton label="ShowMotion" className="mt-[6px]"><Svg w={46} h={48}><path d="M1 2h12v12H1zM17 2h12v12H17zM33 2h12v12H33zM1 20h32v26H1z" stroke={K} strokeWidth="2.500" /><path d="M10 25l14 8-14 8z" fill={K} /></Svg></IconButton>
      <IconButton label="Navigation bar options" className="mb-[3px] mr-[2px] mt-auto self-end"><Svg w={16} h={16}><circle cx="8" cy="8" r="7.500" fill="#333" /><path d="M4 6h8M5 9h6l-3 3z" stroke="#555" strokeWidth="1.500" /></Svg></IconButton>
    </aside>
  );
}

function CommandLine() {
  return (
    <div className="flex h-[95px] w-[1714px] max-w-full overflow-hidden rounded-[6px]">
      <div className="flex w-[116px] shrink-0 items-center bg-[#222631] pl-[8px]">
        <Svg w={10} h={36}><path d="M1.500 0v36M8.500 0v36" stroke="#b4b4b4" strokeWidth="3" strokeDasharray="3 3.500" /></Svg>
        <IconButton label="Close command line" className="ml-[15px]"><Svg w={18} h={18}><path d="M2 2l14 14M16 2L2 16" stroke="#aaa" strokeWidth="4" /></Svg></IconButton>
        <IconButton label="Customize command line" className="ml-[24px]"><Svg w={30} h={30}><path d="M3 27L19 11" stroke="#aaa" strokeWidth="6" strokeLinecap="round" /><path d="M25 2c-6-3-12 3-9 9l4 4c6 2 11-3 9-9l-4 4-4-3z" fill="#aaa" /></Svg></IconButton>
      </div>
      <div className="flex min-w-0 flex-1 items-center border-y-2 border-r-2 border-[#1b2027]/80 bg-white/70 bg-clip-padding pl-[8px] pr-[7px]">
        <IconButton label="Recent commands">
          <Svg w={32} h={24}><path d="M1 1h30v22H1z" stroke="#808080" strokeWidth="2" /><path d="M1 1h30v4H1z" fill="#808080" /><path d="M4 9l5 4-5 4M12 17h7" stroke="#808080" strokeWidth="2" /></Svg>
          <Svg w={16} h={8} className="ml-[4px]"><path d="M0 0h16l-8 8z" fill="#808080" /></Svg>
        </IconButton>
        <input type="text" aria-label="Command" placeholder="Type a command" className="ml-[12px] min-w-0 flex-1 bg-transparent pt-[3px] font-['Liberation_Mono',monospace] text-[23px] italic text-[#555] outline-none placeholder:text-[#555]" />
        <IconButton label="Command history"><Svg w={14} h={8}><path d="M0 8h14L7 0z" fill="#4a4a4a" /></Svg></IconButton>
      </div>
    </div>
  );
}

function Canvas() {
  return (
    <main className="relative flex-1 overflow-hidden bg-black text-[23px] text-white">
      <Drawing />
      <div className="relative flex items-start justify-between pt-[7px]">
        <p className="-ml-[6px] leading-[30px]">[−][Custom View][2D Wireframe]</p>
        <div className="flex items-center gap-[20px] pr-[12px] pt-[7px]">
          <IconButton label="Minimize drawing"><Svg w={20} h={20}><path d="M0 12h20v5H0z" fill="#e4e4e4" /></Svg></IconButton>
          <IconButton label="Restore drawing"><Svg w={20} h={20}><path d="M5 2h13v14" stroke="#e4e4e4" strokeWidth="3" /><path d="M2 7h10v11H2z" stroke="#e4e4e4" strokeWidth="4" /></Svg></IconButton>
          <IconButton label="Close drawing"><Svg w={20} h={20}><path d="M2 2l16 16M18 2L2 18" stroke="#e4e4e4" strokeWidth="5" /></Svg></IconButton>
        </div>
      </div>
      <div className="absolute right-[14px] top-[138px]"><ViewCube /></div>
      <div className="absolute right-0 top-[427px]"><NavBar /></div>
      <div className="absolute inset-x-0 bottom-[12px] flex justify-center"><CommandLine /></div>
    </main>
  );
}

/* ---------- status bar ---------- */

function Group({ gap = "ml-[6px]", className = "", children }) {
  return <div className={`flex h-[44px] shrink-0 items-center bg-[#3c4453] ${gap} ${className}`}>{children}</div>;
}

function StatusBar() {
  const scaleMark = <path d="M16 0l4 16 10 16-10-5-4-5-4 5-10 5 10-16z" />;
  return (
    <footer className="flex h-[56px] items-end justify-between border-t-8 border-[#3c4453] bg-[#222933] text-[22px] text-[#f4f4f4]">
      <nav aria-label="Layouts" className="flex h-[48px] items-center pl-[7px]">
        <button type="button" aria-current="page" className="h-[48px] w-[141px] bg-[#3c4453] font-bold [clip-path:polygon(18px_0,100%_0,calc(100%-18px)_100%,0_100%)]">Model</button>
        <button type="button" className="ml-[15px]">a4</button>
        <span className="ml-[17px] pb-[2px]"><Slash /></span>
        <button type="button" className="ml-[17px]">Layout2</button>
        <span className="ml-[19px] pb-[2px]"><Slash /></span>
        <IconButton label="New layout" className="ml-[21px] pb-[2px]"><Plus /></IconButton>
        <span className="ml-[20px] pb-[2px]"><Slash /></span>
      </nav>
      <div className="flex items-center text-[23px]">
        <Group gap=""><button type="button" className="w-[95px] pt-[2px] leading-[30px]">MODEL</button></Group>
        <Group className="w-[128px] justify-center gap-[20px]">
          <IconButton label="Grid"><Svg><path d="M0 7h32M0 16h32M0 25h32M7 0v32M16 0v32M25 0v32" stroke={W} strokeWidth="2.500" /></Svg></IconButton>
          <IconButton label="Snap"><Svg w={26} h={26}><g stroke={W} strokeWidth="4" strokeDasharray="4 7"><path d="M0 3h26M0 13h26M0 23h26" /></g></Svg></IconButton>
          <IconButton label="Snap options"><Caret big /></IconButton>
        </Group>
        <Group className="w-[48px] justify-center"><IconButton label="Dynamic input"><Svg><path d="M7 2v15M0 9h14" stroke={W} strokeWidth="2" /><path d="M12 22h20v8H12z" fill={W} /><path d="M15 23v6" stroke={BG} strokeWidth="2" /></Svg></IconButton></Group>
        <Group gap="ml-[2px]" className="w-[208px] justify-between pl-[8px] pr-[8px]">
          <IconButton label="Ortho"><Svg><path d="M1 0v31h31M1 21h10v10" stroke={W} strokeWidth="2" /></Svg></IconButton>
          <IconButton label="Polar tracking"><Svg><circle cx="13" cy="17" r="12" stroke={W} strokeWidth="2" /><path d="M27 2L13 17h19" stroke={W} strokeWidth="2" /></Svg></IconButton>
          <IconButton label="Polar options"><Caret big /></IconButton>
          <IconButton label="Isometric drafting"><Svg w={28} h={32}><path d="M2 3l24 26" stroke="#e87070" strokeWidth="2.500" /><path d="M14 0v32" stroke="#5fd583" strokeWidth="2.500" /><path d="M12 14h4v4h-4z" fill={BG} stroke="#f4f4f4" strokeWidth="2" /></Svg></IconButton>
          <IconButton label="Isometric options"><Caret big /></IconButton>
        </Group>
        <Group gap="ml-[2px]" className="w-[128px]">
          <button type="button" aria-label="Object snap tracking" aria-pressed="true" className="ml-[2px] flex h-[42px] w-[44px] items-center justify-center self-end bg-[#6090c4]"><Svg><path d="M24 3L2 29h30" stroke="#fff" strokeWidth="2.500" /><path d="M11 11h6v6h-6z" fill="#fff" /></Svg></button>
          <IconButton label="Object snap" className="ml-[9px]"><Svg w={34} h={34}><path d="M14 6h18v26H6V13" stroke={W} strokeWidth="2" /><path d="M2 2h8v8H2z" stroke="#f5b078" strokeWidth="2.500" /></Svg></IconButton>
          <IconButton label="Object snap options" className="ml-[15px]"><Caret big /></IconButton>
        </Group>
        <Group className="w-[212px]">
          <button type="button" aria-label="Annotation visibility" aria-pressed="true" className="ml-[2px] flex h-[42px] w-[44px] items-center justify-center self-end bg-[#6090c4]"><Svg><g fill="#fff" transform="translate(-2 0)">{scaleMark}</g><circle cx="26" cy="8" r="5" stroke="#fff" strokeWidth="2" /></Svg></button>
          <IconButton label="Auto scale" className="ml-[10px]"><Svg><g fill={W} transform="translate(-2 0)">{scaleMark}</g><path d="M27 0l-6 9h5l-2 6 8-9h-5l2-6z" fill={W} stroke={BG} strokeWidth=".500" /></Svg></IconButton>
          <IconButton label="Annotation scale" className="ml-[16px]"><Svg><g fill={W}>{scaleMark}</g></Svg></IconButton>
          <button type="button" className="ml-[17px] flex items-center gap-[8px] pt-[2px] leading-[30px]">1:1<Caret big /></button>
        </Group>
        <Group className="w-[334px]">
          <IconButton label="Workspace settings" className="ml-[8px]"><Svg><path d="M12 0h8v5l4 2 4-3 4 6-4 2v7l4 3-4 6-4-3-4 2v5h-8v-5l-4-2-4 3-4-6 4-3v-7L0 10l4-6 4 3 4-2z" fill={W} /><circle cx="16" cy="16" r="5" fill={BG} /></Svg></IconButton>
          <button type="button" className="ml-[18px] flex items-center gap-[9px] whitespace-nowrap pt-[2px] leading-[30px]">Drafting &amp; Annotation<Caret big /></button>
        </Group>
        <Group gap="ml-[2px]" className="w-[48px] justify-center"><IconButton label="Annotation monitor"><Svg><path d="M16 0v32M0 16h32" stroke={W} strokeWidth="4" /></Svg></IconButton></Group>
        <Group className="w-[48px] justify-center"><IconButton label="Isolate objects"><Svg><path d="M1 1h12v12H1zM13 21l7 10H6z" stroke={W} strokeWidth="2" /><circle cx="25" cy="13" r="6" stroke={W} strokeWidth="2" /></Svg></IconButton></Group>
        <Group className="w-[60px] justify-center"><IconButton label="Drawing format" className="self-start"><Svg w={48} h={44}><path d="M0 0h28l11 12v20l-8 8H0z" fill="#2c66a8" /><path d="M28 0l11 12H28z" fill="#8db4dc" /><path d="M0 28h18l4 14H0z" fill="#f8b62a" /><path d="M11 0v28M0 11h28" stroke="#fff" strokeWidth="2" /><rect x="7" y="7" width="8" height="8" fill="#2c66a8" stroke="#fff" strokeWidth="2" /><path d="M20 34l8 8 18-15" stroke="#4cb050" strokeWidth="6" /></Svg></IconButton></Group>
        <Group className="w-[91px] gap-[16px] pl-[8px]">
          <IconButton label="Clean screen"><Svg><path d="M1 5h30v22H1z" stroke={W} strokeWidth="2" /><path d="M5 24v-7l7 7zM27 8v7l-7-7zM7 22l5-5M20 15l5-5" fill={W} stroke={W} /></Svg></IconButton>
          <IconButton label="Customization"><Svg><path d="M0 4h32M0 16h32M0 28h32" stroke={W} strokeWidth="4" /></Svg></IconButton>
        </Group>
      </div>
    </footer>
  );
}

export default function App() {
  return (
    <div className="flex min-h-screen flex-col overflow-hidden bg-[#222933] font-['Noto_Sans','Open_Sans',sans-serif]">
      <TitleBar />
      <RibbonTabs />
      <Ribbon />
      <FileTabs />
      <Canvas />
      <StatusBar />
    </div>
  );
}
